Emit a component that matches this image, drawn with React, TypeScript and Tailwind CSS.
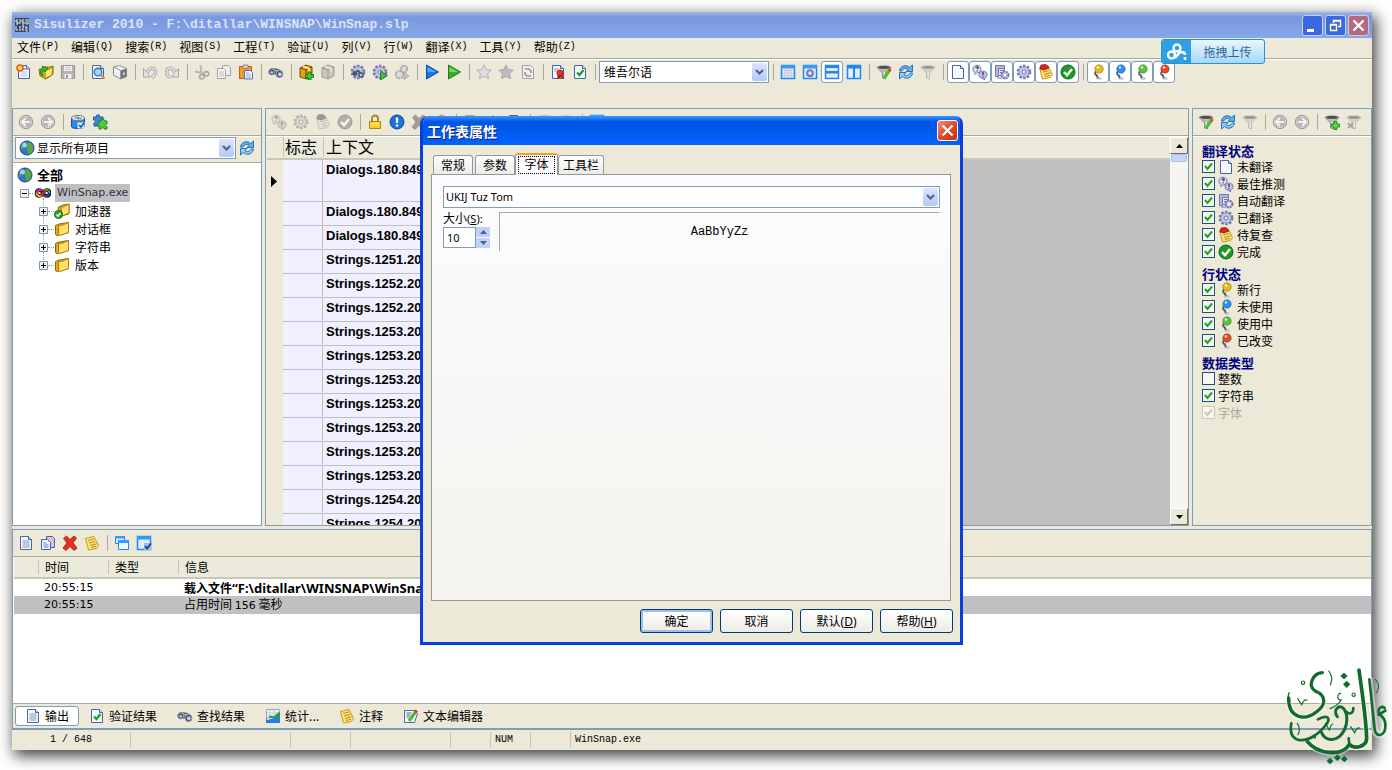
import React from 'react';
import clsx from 'clsx';

const page = (
  <>
    <path d="M2.500 1.500h8l3 3v10h-11z" fill="#f4f8ff" stroke="#4a64a0" />
    <path d="M10.500 1.500v3h3" fill="#cfdcf5" stroke="#4a64a0" />
  </>
);

const gear = (
  <>
    <circle cx="8" cy="8" r="6" fill="none" stroke="#6f74ad" strokeWidth="2.600" strokeDasharray="2.400 1.400" />
    <circle cx="8" cy="8" r="5.200" fill="#c3c6ea" stroke="#8a8fc4" />
    <circle cx="8" cy="8" r="2" fill="#f1f1fb" stroke="#6f74ad" />
  </>
);

const funnel = (
  <>
    <path d="M1 3.500 6.500 9v5l3 1V9L15 3.500z" fill="#b9b9b9" stroke="#777" strokeWidth=".7" />
    <ellipse cx="8" cy="3.400" rx="7" ry="2.100" fill="#4f4f4f" stroke="#c9c9c9" />
    <path d="M8.300 8v6" stroke="#eee" strokeWidth="1.200" />
  </>
);

const binoculars = (
  <>
    <path d="M.5 6.500 3 4l5 .5L11 5l4 3.500-.5 4-4 1.500-3-3.500-3 .5-3.500-1z" fill="#56606e" />
    <circle cx="3.800" cy="8" r="3" fill="#39424e" stroke="#9ba4af" />
    <circle cx="11.500" cy="10" r="3.500" fill="#39424e" stroke="#9ba4af" />
    <circle cx="3.800" cy="8.300" r="1.500" fill="#a9c7e8" />
    <circle cx="11.800" cy="10.200" r="2" fill="#b9d5f2" />
    <path d="m5 5 3 2 3-1" stroke="#c3c9d1" fill="none" />
  </>
);

const box = (
  <>
    <path d="m2 4 6-3 6 2v9l-6 3-6-2z" fill="#e2a01b" stroke="#7a4d08" />
    <path d="m2 4 6 2 6-3M8 6v9" stroke="#7a4d08" fill="none" />
    <path d="m5 2.500 6 2v3" stroke="#fff0b0" strokeWidth="1.600" fill="none" />
  </>
);

const doubleGear = (
  <>
    <circle cx="10" cy="5" r="3.300" fill="#dcdcdc" stroke="#a3a3a3" strokeWidth="2" strokeDasharray="1.600 1" />
    <circle cx="5.500" cy="10.500" r="3.800" fill="#dcdcdc" stroke="#a3a3a3" strokeWidth="2" strokeDasharray="1.600 1" />
    <path d="m10 8.500 5 3.500-5 3.500z" fill="#c4c4c4" stroke="#a3a3a3" strokeWidth=".8" />
  </>
);

const noteSheet = (
  <>
    <path d="m1.500 3.500 8.500-2 4.500 9-2 3-8 1.500z" fill="#fbe27a" stroke="#c79a1c" />
    <path d="m4 5.500 6-1.500M5 8l6-1.500M6 10.500l6.500-1.700M7 12.500l5-1.200" stroke="#b88a1c" />
  </>
);

const frame = <path d="M1.500 1.500h13v13h-13z" fill="#e4ecff" stroke="#1c86f2" strokeWidth="1.500" />;

const circleBack = (
  <>
    <circle cx="8" cy="8" r="6.700" fill="#b4b4b4" stroke="#989898" />
    <circle cx="8" cy="8" r="5.700" fill="none" stroke="#d2d2d2" />
  </>
);

const starPath = 'm8 1 2.200 4.600 5 .6-3.700 3.500 1 5L8 12.300l-4.500 2.400 1-5L.8 6.200l5-.6z';

const art = {
  page,
  gear,
  funnel,
  binoculars,
  note: noteSheet,
  newDoc: (
    <>
      {page}
      <path d="M2.500 5h11" stroke="#7d9de0" strokeWidth="1.500" />
      <path d="M5 8h6M5 10h6M5 12h6" stroke="#b7c8ea" />
      <circle cx="4" cy="4" r="3" fill="#ffdd35" stroke="#f2542c" strokeWidth="1.500" />
    </>
  ),
  open: (
    <>
      <path d="M1 5h5l1-2h5l3-1v8l-7 5-6-3z" fill="#f0c024" stroke="#9a7408" />
      <path d="m7 7 8-4-1 8-7 4z" fill="#ffe56a" stroke="#9a7408" />
      <path d="M4 12C1 8 2 5 5 4L4 2l6 2-3 4-.5-2C4.500 7 4 9 5 12z" fill="#35b52a" stroke="#157013" strokeWidth=".7" />
    </>
  ),
  save: (
    <>
      <path d="M1.500 1.500h13v13h-13z" fill="#b5b5b5" stroke="#989898" />
      <path d="M4 2h8v5H4zM4.500 10h7v4.500h-7z" fill="#f2f2f2" />
      <path d="M6 11h2v3H6z" fill="#999" />
      <path d="M5 3.500h6M5 5.500h6" stroke="#c4c4c4" />
    </>
  ),
  preview: (
    <>
      {page}
      <circle cx="8" cy="8" r="3.800" fill="#a8d5f8" stroke="#2f76b5" strokeWidth="1.400" />
      <path d="m11 11 3.500 3.500" stroke="#e8842c" strokeWidth="2.300" />
    </>
  ),
  pack: (
    <>
      <path d="m1.500 3 6-1.500 7 3v8l-6 2.500-7-4z" fill="#f2f2f2" stroke="#8b8b8b" />
      <path d="m8.500 6.500 6-2v8l-6 2.500z" fill="#777" />
      <path d="m1.500 3 7 3.500v8" stroke="#999" fill="none" />
      <path d="m11 9 2-.7v2l-2 .7z" fill="#ddd" />
    </>
  ),
  undo: (
    <>
      <path d="M5 9.500C6 4 12.500 2 13.200 7c.3 3-1.200 5.500-3.700 6.500" fill="none" stroke="#a8a8a8" strokeWidth="3.400" />
      <path d="M1.500 4.500v8.500h7z" fill="#e4e4e4" stroke="#a8a8a8" />
      <path d="M5 9.500C6 4 12.500 2 13.200 7c.3 3-1.200 5.500-3.700 6.500" fill="none" stroke="#e4e4e4" strokeWidth="1.500" />
    </>
  ),
  redo: (
    <>
      <path d="M11 9.500C10 4 3.500 2 2.800 7c-.3 3 1.200 5.500 3.700 6.500" fill="none" stroke="#a8a8a8" strokeWidth="3.400" />
      <path d="M14.500 4.500v8.500h-7z" fill="#e4e4e4" stroke="#a8a8a8" />
      <path d="M11 9.500C10 4 3.500 2 2.800 7c-.3 3 1.200 5.500 3.700 6.500" fill="none" stroke="#e4e4e4" strokeWidth="1.500" />
    </>
  ),
  cut: (
    <>
      <path d="M1 7.500 11 9.500M6.500 1l1 9" stroke="#b9b9b9" strokeWidth="2" />
      <circle cx="12.500" cy="9.800" r="2.200" fill="none" stroke="#a9a9a9" strokeWidth="1.600" />
      <circle cx="7.800" cy="12.800" r="2.200" fill="none" stroke="#a9a9a9" strokeWidth="1.600" />
    </>
  ),
  copy: (
    <>
      <path d="M6.500 1.500h6l2 2v8h-8z" fill="#eee" stroke="#a4a4a4" />
      <path d="M1.500 4.500h6l2 2v8h-8z" fill="#f6f6f6" stroke="#a4a4a4" />
      <path d="M3 8h5M3 10h5M3 12h5" stroke="#bdbdbd" />
    </>
  ),
  paste: (
    <>
      <path d="M1.500 2.500h12v12h-12z" fill="#f39b2d" stroke="#b5650d" />
      <path d="M5 1h5v3.500H5z" fill="#ccd0d8" stroke="#777" strokeWidth=".7" />
      <path d="M6.500 6.500h6l2 2v6.500h-8z" fill="#f4f7ff" stroke="#5872ab" />
      <path d="M8 9h3M8 11h5M8 13h5" stroke="#93a7d2" />
    </>
  ),
  boxAdd: (
    <>
      {box}
      <path d="M10 8h3v2.500h2.500v3H13V16h-3v-2.500H7.500v-3H10z" fill="#3ecb2f" stroke="#0c6b10" strokeWidth=".8" />
    </>
  ),
  boxOff: box,
  gearFind: (
    <>
      {gear}
      <circle cx="5" cy="9.500" r="2.400" fill="#4b5563" />
      <circle cx="11" cy="11" r="2.800" fill="#4b5563" />
      <circle cx="11" cy="11" r="1.300" fill="#b9d5f2" />
      <path d="m5 8.500 3-1.500 3 2.500" stroke="#4b5563" strokeWidth="1.800" fill="none" />
    </>
  ),
  gearPlay: (
    <>
      {gear}
      <path d="m8.500 7 7 4.500-7 4.500z" fill="#3fbf35" stroke="#187515" strokeWidth=".8" />
    </>
  ),
  gears: doubleGear,
  playBlue: (
    <>
      <path d="m2.500 1 12 7-12 7z" fill="#1878e8" stroke="#0c4aa8" />
      <path d="M3.500 3v5h8.500z" fill="#5aa8fa" />
    </>
  ),
  playGreen: (
    <>
      <path d="m2.500 1 12 7-12 7z" fill="#3dae2c" stroke="#1f7d18" />
      <path d="M3.500 3v5h8.500z" fill="#7ed464" />
    </>
  ),
  star: <path d={starPath} fill="#dedede" stroke="#b4b4b4" />,
  starDark: <path d={starPath} fill="#bcbcbc" stroke="#a8a8a8" />,
  docSync: (
    <>
      <path d="M2.500 1.500h8l3 3v10h-11z" fill="#f0f0f0" stroke="#a3a3a3" />
      <path d="M5 5h4l2 2v2M11 12H7L5 10V8" fill="none" stroke="#969696" strokeWidth="1.700" />
    </>
  ),
  award: (
    <>
      {page}
      <path d="M4 5h5M4 7h3" stroke="#8da0c8" />
      <path d="m7 15 1-5h4l2 5-3-1.500z" fill="#c0150b" />
      <circle cx="10" cy="9" r="3" fill="#f0331c" stroke="#b51106" />
    </>
  ),
  docCheck: (
    <>
      {page}
      <path d="m5 8.500 2.500 2.500 4-5" fill="none" stroke="#1ea327" strokeWidth="2.400" />
    </>
  ),
  viewGrid: (
    <>
      {frame}
      <path d="M1 1h14v3.500H1z" fill="#2e9bff" />
      <path d="M2.500 6.500h11M2.500 9h11M2.500 11.500h11M5 5v9M8 5v9M11 5v9" stroke="#c1b8c8" strokeWidth=".7" />
    </>
  ),
  viewGear: (
    <>
      {frame}
      <path d="M1 1h14v3.500H1z" fill="#2e9bff" />
      <circle cx="8" cy="9.200" r="3" fill="#b9bce0" stroke="#777ba8" strokeWidth="1.800" />
      <circle cx="8" cy="9.200" r="1" fill="#fff" />
    </>
  ),
  viewRows: (
    <>
      {frame}
      <path d="M1 1h14v3H1zM1 7h14v2.500H1z" fill="#1c86f2" />
    </>
  ),
  viewCols: (
    <>
      {frame}
      <path d="M1 1h14v3.500H1zM7 2h2v13H7z" fill="#1c86f2" />
    </>
  ),
  funnelEdit: (
    <>
      {funnel}
      <path d="m8 14 5.500-7.500" stroke="#45c429" strokeWidth="3" />
      <path d="m13 7 1.500-2" stroke="#e3382a" strokeWidth="3" />
    </>
  ),
  funnelAdd: (
    <>
      {funnel}
      <path d="M10 7.500h3V10h2.500v3H13v2.500h-3V13H7.500v-3H10z" fill="#5cd543" stroke="#0c7a10" strokeWidth=".8" />
    </>
  ),
  funnelDel: (
    <>
      {funnel}
      <path d="m2 9 5 5M7 9l-5 5" stroke="#666" strokeWidth="1.800" />
    </>
  ),
  refresh: (
    <>
      <path d="M1.500 7C2 2 8 0 11.500 3.500L14.500 1v6.500H8L10 5.300C7.500 3.500 5 4.500 4 7z" fill="#5fb0f3" stroke="#1d65b3" strokeWidth=".9" />
      <path d="M14.500 9c-.5 5-6.500 7-10 3.500L1.500 15V8.500H8L6 10.700c2.500 1.800 5 .8 6-1.700z" fill="#8ccaf8" stroke="#1d65b3" strokeWidth=".9" />
    </>
  ),
  guess: (
    <>
      <path d="M1 5c0-5 8-5 8 0 0 3-3 4-4.500 4L3 10.500V8.500C1.500 8 1 6.500 1 5z" fill="#e0e1f5" stroke="#6f74ad" />
      <path d="M7 10.500c0-4.500 8-4.500 8 0 0 2-1 3-2.500 3.500V16L10 14c-2 0-3-1.500-3-3.500z" fill="#bdc0e6" stroke="#6f74ad" />
      <path d="M3.700 3.800c.3-1.500 3-1.300 2.500.2L5 5.200M5 6.500v1M11 8v3M11 12.200v1" stroke="#1f2350" strokeWidth="1.200" fill="none" />
    </>
  ),
  autoTr: (
    <>
      <path d="M1.500 1.500h9v3h-6v8h-3z" fill="#b6b9de" stroke="#7377ae" />
      <path d="M4.500 4.500h6v7h-6z" fill="#e3e4f6" stroke="#7377ae" />
      <path d="M6 6.500h4M6 8.500h4M3 14h5" stroke="#7377ae" />
      <circle cx="11" cy="11" r="3.500" fill="#c3c6ea" stroke="#6f74ad" strokeWidth="1.800" strokeDasharray="2 .8" />
      <circle cx="11" cy="11" r="1.200" fill="#fff" />
    </>
  ),
  review: (
    <>
      {noteSheet}
      <path d="m3 1 5-.5 3 3.500-5 2-4-1z" fill="#dc2418" stroke="#8e0f08" strokeWidth=".7" />
    </>
  ),
  done: (
    <>
      <circle cx="8" cy="8" r="7" fill="#1c9a26" stroke="#0b6615" />
      <path d="m4 8 3 3.200L12 5" fill="none" stroke="#fff" strokeWidth="2.500" />
    </>
  ),
  back: (
    <>
      {circleBack}
      <path d="M8 4 4 8l4 4M4.500 8H12" fill="none" stroke="#f4f4f4" strokeWidth="2" />
    </>
  ),
  forward: (
    <>
      {circleBack}
      <path d="m8 4 4 4-4 4M11.500 8H4" fill="none" stroke="#f4f4f4" strokeWidth="2" />
    </>
  ),
  dbCheck: (
    <>
      <path d="M1.500 4v9c1 2 12 2 13 0V4z" fill="#2b86e0" stroke="#1353a5" />
      <path d="M1.500 4c0-3.500 13-3.500 13 0s-13 3.500-13 0z" fill="#eef1f5" stroke="#707c8c" />
      <path d="M4 4h8M8 2v4M5 2.500l6 3" stroke="#7c8896" />
      <path d="M7.500 8.500h7v6h-7z" fill="#d7eaff" />
      <path d="m9 11 2 2 3-4" stroke="#1353a5" strokeWidth="1.500" fill="none" />
    </>
  ),
  plugin: (
    <>
      <path d="M1.500 3h3c-1-3 4-3 3 0H11v4c-3-1-3 4 0 3v2H2V9c2 0 2-3-.5-3z" fill="#3987d8" stroke="#1b579f" />
      <path d="M7 7h2.500c-.5-2.500 3.500-2.500 3 0H15v3c-2 0-2 2.500 0 2.500V15h-3c0-2-2.500-2-2.500 0H7v-3c-2 0-2-2.500 0-2.500z" fill="#53c83a" stroke="#1f8419" />
    </>
  ),
  globe: (
    <>
      <circle cx="8" cy="8" r="7" fill="#2c78c4" stroke="#174c86" />
      <path d="M9 2c3 0 5 3 5.300 5.500C14 11 12 13.500 10.500 14 8 13 9 11 8 9s1-2 .500-3.500S8 3 9 2zM2 6l2-1v4l-1.500 1C1.500 9 1.500 7 2 6z" fill="#5da53f" />
      <circle cx="5.500" cy="5" r="2.500" fill="#cfe9ff" opacity=".75" />
    </>
  ),
  lock: (
    <>
      <path d="M5 8V4.500c0-4 6-4 6 0V8" fill="none" stroke="#a98614" strokeWidth="1.800" />
      <path d="M2.500 7.500h11v7h-11z" fill="#ffcb1f" stroke="#b5820a" />
      <path d="M4 9h8M4 11h8" stroke="#ffe98a" />
    </>
  ),
  alert: (
    <>
      <circle cx="8" cy="8" r="7" fill="#1a73dc" stroke="#0b4a9c" />
      <path d="M8 3.500V9M8 10.500v2" stroke="#fff" strokeWidth="2.400" />
    </>
  ),
  cross: <path d="M1.500 3.500 4.500 1 8 4.500 12 1l2.500 2L11 8l4 5-3 2.500-4-4-4 4L1 13l4-5z" fill="#e5301d" stroke="#9c140a" strokeWidth=".8" />,
  textDoc: (
    <>
      {page}
      <path d="M4.500 6h7M4.500 8h7M4.500 10h7M4.500 12h7" stroke="#8798b8" />
    </>
  ),
  copyDocs: (
    <>
      <path d="M6.500 1.500h6l2 2v9h-8z" fill="#cfc4ea" stroke="#65549a" />
      <path d="M1.500 4.500h6l3 3v7h-9z" fill="#f2f6ff" stroke="#4a64a0" />
      <path d="M3.500 8h3M3.500 10h5M3.500 12h5" stroke="#6580b8" />
    </>
  ),
  windows: (
    <>
      <path d="M1.500 1.500h9v7h-9z" fill="#dcecff" stroke="#1c86f2" />
      <path d="M1 1h10v2.500H1z" fill="#2e9bff" />
      <path d="M4.500 5.500h10v9h-10z" fill="#eff6ff" stroke="#1c86f2" />
      <path d="M4 5h11v3H4z" fill="#2e9bff" />
    </>
  ),
  winCheck: (
    <>
      {frame}
      <path d="M1 1h14v3.500H1z" fill="#2e9bff" />
      <path d="M8 8h7v7H8z" fill="#9dbbe8" />
      <path d="m9 11 2 2.500 4-5" fill="none" stroke="#143f93" strokeWidth="1.800" />
    </>
  ),
  chart: (
    <>
      <path d="M1.500 1.500h13v13h-13z" fill="#eef1f7" stroke="#9aa6bd" />
      <path d="M2 5h12M2 8h12M5 2v12M9 2v12" stroke="#c3ccdc" />
      <path d="M1 11c4-1 3-5 6-3s4-4 8-4v6H1z" fill="#29a03a" />
      <path d="M1 12c5 0 7-3 14-3v6H1z" fill="#2a7ae0" />
    </>
  ),
  edit: (
    <>
      <path d="M1.500 2.500h10l3 3-3 9h-10z" fill="#f4f8ff" stroke="#53688e" />
      <path d="M3.500 5h5M3.500 7h4M3.500 9h3" stroke="#55647d" />
      <path d="m6 13 6.500-9" stroke="#41bd31" strokeWidth="3" />
      <path d="m12 4.500 1.700-2.300" stroke="#e3382a" strokeWidth="3.200" />
    </>
  ),
  folder: (
    <>
      <path d="M1.500 4.500 5 3l9.500-1.500v10L3 14.500l-1.500-1z" fill="#e2a91d" stroke="#946705" />
      <path d="m4.500 4 3 .5 7-3v10l-8.500 3-1.500-1z" fill="#ffe068" stroke="#b07d0b" />
    </>
  ),
  folderDone: (
    <>
      <path d="M4 4.500 9 2l6-1v10L5 13.500z" fill="#e2a91d" stroke="#946705" />
      <path d="m7 3.500 2 .5 6-3v9l-7 3z" fill="#ffe068" stroke="#b07d0b" />
      <circle cx="4.500" cy="11.500" r="4" fill="#2fa332" stroke="#11691a" />
      <path d="m2.500 11.500 1.500 1.700 2.500-3.200" fill="none" stroke="#fff" strokeWidth="1.500" />
    </>
  ),
  exe: (
    <>
      <path d="M8 8C6 4 1.500 4 1.500 8S6 12 8 8s6.500-4 6.500 0S10 12 8 8z" fill="none" stroke="#111" strokeWidth="3.600" />
      <path d="M7 6C5 4 1.500 5 1.500 8" fill="none" stroke="#e01fc0" strokeWidth="1.800" />
      <path d="M1.500 8c0 3 3.500 4 5.500 2" fill="none" stroke="#f4d316" strokeWidth="1.800" />
      <path d="M9 6c2-2 5.500-1 5.500 2" fill="none" stroke="#2bc32b" strokeWidth="1.800" />
      <path d="M14.500 8c0 3-3.500 4-5.500 2" fill="none" stroke="#2540e0" strokeWidth="1.800" />
      <path d="m6 11 4.500-6" stroke="#e3221a" strokeWidth="2.400" />
    </>
  ),
};

type IconName = keyof typeof art;

const Icon: React.FC<{ name: IconName; off?: boolean }> = ({ name, off }) => (
  <svg viewBox="0 0 16 16" className={clsx('size-4 shrink-0', off && 'opacity-50 grayscale')} aria-hidden="true">
    {art[name]}
  </svg>
);

const Pin: React.FC<{ color: string }> = ({ color }) => (
  <svg viewBox="0 0 16 16" className="size-4 shrink-0" aria-hidden="true">
    <ellipse cx="9" cy="14.500" rx="3" ry="1.300" fill="#b9cbd3" />
    <path d="M6 7.500c-2 2-.5 3.500.5 3.500l1.500 3" stroke="#5b5b5b" strokeWidth="1.800" fill="none" />
    <circle cx="9" cy="5" r="4.300" fill={color} stroke="#00000055" strokeWidth=".8" />
    <circle cx="8" cy="3.500" r="1.300" fill="#fff" opacity=".75" />
  </svg>
);

const Separator = () => (
  <div className="flex w-2 shrink-0 justify-center">
    <div className="h-4 w-px bg-[#aca899]" />
  </div>
);

type Tool = IconName | `${IconName}!` | '|';

// "!" marks a disabled tool, "|" a separator
const Tools: React.FC<{ items: Tool[]; boxed?: IconName[] }> = ({ items, boxed = [] }) => (
  <>
    {items.map((item, i) => {
      if (item === '|') return <Separator key={i} />;
      const off = item.endsWith('!');
      const name = item.replace('!', '') as IconName;
      return (
        <button
          key={i}
          type="button"
          aria-label={name}
          disabled={off}
          className={clsx(
            'flex size-[22px] shrink-0 items-center justify-center rounded-[3px]',
            boxed.includes(name) && 'border border-[#7f9db9] bg-white'
          )}
        >
          <Icon name={name} off={off} />
        </button>
      );
    })}
  </>
);

const ToolStrip: React.FC<{ items: Tool[] }> = ({ items }) => (
  <div className="flex h-[27px] shrink-0 items-center overflow-hidden border-b border-[#aca899] pl-0.5">
    <Tools items={items} />
  </div>
);

const Combo: React.FC<{ label: string; value: string; className?: string; textClass?: string }> = ({
  label,
  value,
  className,
  textClass = 'pl-1',
}) => (
  <div className={clsx('grid h-[22px] border border-[#7f9db9] bg-white', className)}>
    <select
      aria-label={label}
      defaultValue={value}
      className={clsx('h-5 w-full appearance-none bg-transparent outline-none [grid-area:1/1]', textClass)}
    >
      <option>{value}</option>
    </select>
    <span className="pointer-events-none m-px flex w-[15px] items-center justify-center justify-self-end rounded-[2px] bg-gradient-to-b from-[#dbe5fe] to-[#b5c8f5] [grid-area:1/1]">
      <svg viewBox="0 0 9 6" className="h-1.5 w-[9px]">
        <path d="m1 1 3.500 3.500L8 1" fill="none" stroke="#4d6185" strokeWidth="2" />
      </svg>
    </span>
  </div>
);

const menus = [
  ['文件', 'P'], ['编辑', 'Q'], ['搜索', 'R'], ['视图', 'S'], ['工程', 'T'], ['验证', 'U'],
  ['列', 'V'], ['行', 'W'], ['翻译', 'X'], ['工具', 'Y'], ['帮助', 'Z'],
];

const MenuBar = () => (
  <nav className="flex h-[21px] shrink-0 items-start gap-3 border-b border-[#aca899] px-[5px]">
    {menus.map(([label, key]) => (
      <button key={key} type="button" className="flex items-center leading-[18px] whitespace-nowrap">
        {label}
        <span className="font-['Liberation_Mono',monospace] text-[10px]">({key})</span>
      </button>
    ))}
  </nav>
);

const TitleBar = () => (
  <header className="flex h-[26px] shrink-0 items-center bg-gradient-to-b from-[#9db9eb] via-[#7a96df] via-20% to-[#84a9e9] px-[3px]">
    <svg viewBox="0 0 14 14" className="size-3.5 shrink-0" aria-hidden="true">
      <path d="M0 0h14v14H0z" fill="#3a4a63" />
      <path d="M1 2h2M1 2v2h2v2H1M5 1v5M7 2h2M7 2v2h2v2H7M11 1v5h2V1M1 8v4h2M5 8v5M7 8h2l-2 4h2M11 8v5h2M11 10h2" stroke="#dfe8f5" fill="none" />
    </svg>
    <h1 className="flex-1 truncate pl-[5px] font-['Liberation_Mono',monospace] text-[13px] font-bold text-[#d8e4f8]">
      Sisulizer 2010 - F:\ditallar\WINSNAP\WinSnap.slp
    </h1>
    <div className="flex gap-0.5">
      <button type="button" aria-label="最小化" className="flex size-[21px] items-center justify-center rounded-[3px] border border-[#c5d3f7] bg-[#3c68dd]">
        <svg viewBox="0 0 19 19" className="size-[19px]"><path d="M4 13h7v3H4z" fill="#fff" /></svg>
      </button>
      <button type="button" aria-label="还原" className="flex size-[21px] items-center justify-center rounded-[3px] border border-[#c5d3f7] bg-[#3c68dd]">
        <svg viewBox="0 0 19 19" className="size-[19px]">
          <path d="M7.500 7V4.500h7v6H12M7 5h8M4.500 8.500h6v6h-6zM4 9h7" fill="none" stroke="#fff" strokeWidth="1.400" />
        </svg>
      </button>
      <button type="button" aria-label="关闭" className="flex size-[21px] items-center justify-center rounded-[3px] border border-[#d9c5dc] bg-[#b36a80]">
        <svg viewBox="0 0 19 19" className="size-[19px]"><path d="m4.500 4.500 10 10M14.500 4.500l-10 10" stroke="#fff" strokeWidth="2.200" /></svg>
      </button>
    </div>
  </header>
);

const pins = ['#e5bd12', '#2391f5', '#55c53c', '#e34923'];

const MainToolbar = () => (
  <div className="flex h-[49px] shrink-0 items-start overflow-hidden border-t border-white pt-px pl-px">
    <div className="flex items-center">
      <Tools
        boxed={['viewRows']}
        items={[
          'newDoc', 'open', 'save', '|', 'preview', 'pack', '|', 'undo', 'redo', '|', 'cut', 'copy', 'paste', '|',
          'binoculars', '|', 'boxAdd', 'boxOff!', '|', 'gearFind', 'gearPlay', 'gears', '|', 'playBlue', 'playGreen', '|',
          'star', 'starDark', 'docSync', '|', 'award', 'docCheck', '|',
        ]}
      />
      <Combo label="语言" value="维吾尔语" className="w-[170px] shrink-0" />
      <Tools
        boxed={['viewRows', 'page', 'guess', 'autoTr', 'gear', 'review', 'done']}
        items={[
          '|', 'viewGrid', 'viewGear', 'viewRows', 'viewCols', '|', 'funnelEdit', 'refresh', 'funnel!', '|',
          'page', 'guess', 'autoTr', 'gear', 'review', 'done', '|',
        ]}
      />
      {pins.map((color) => (
        <button key={color} type="button" aria-label="行状态" className="flex size-[22px] shrink-0 items-center justify-center rounded-[3px] border border-[#7f9db9] bg-white">
          <Pin color={color} />
        </button>
      ))}
    </div>
  </div>
);

const Expander: React.FC<{ open?: boolean }> = ({ open }) => (
  <svg viewBox="0 0 9 9" className="size-[9px] shrink-0" aria-hidden="true">
    <path d="M.5.5h8v8h-8z" fill="#f3f1ea" stroke="#7898b5" />
    <path d={open ? 'M2 4.500h5' : 'M2 4.500h5M4.500 2v5'} stroke="#000" />
  </svg>
);

const folders = ['加速器', '对话框', '字符串', '版本'];

const ProjectPanel = () => (
  <section className="flex w-[250px] shrink-0 flex-col border border-[#7f9db9]">
    <ToolStrip items={['back', 'forward', '|', 'dbCheck', 'plugin']} />
    <div className="flex h-[27px] shrink-0 items-start gap-[3px] border-y border-t-white border-b-[#aca899] pl-0.5">
      <div className="grid w-[221px] items-center">
        <Combo label="显示项目" value="显示所有项目" className="[grid-area:1/1]" textClass="pl-[21px]" />
        <span className="pointer-events-none pl-1 [grid-area:1/1]"><Icon name="globe" /></span>
      </div>
      <button type="button" aria-label="刷新" className="flex h-[22px] items-center"><Icon name="refresh" /></button>
    </div>
    <ul className="flex-1 bg-white pt-[3px] pl-1">
      <li className="flex h-[18px] items-center gap-1 text-[13px] font-bold"><Icon name="globe" />全部</li>
      <li>
        <div className="flex h-[18px] items-center pl-[3px]">
          <Expander open />
          <span className="w-1.5 border-t border-dotted border-gray-400" />
          <Icon name="exe" />
          <span className="ml-1 h-[18px] bg-[#c0c0c0] px-0.5 font-['DejaVu_Sans',sans-serif] text-[11px] leading-[18px] text-[#303048]">WinSnap.exe</span>
        </div>
        <ul className="ml-[26px]">
          {folders.map((name, i) => (
            <li key={name} className="relative flex h-[18px] items-center">
              <span className="absolute left-0 -top-1 h-3 border-l border-dotted border-gray-400" />
              <span className="relative -ml-1 flex items-center">
                <Expander />
                <span className="w-1.5 border-t border-dotted border-gray-400" />
                <Icon name={i === 0 ? 'folderDone' : 'folder'} />
              </span>
              <span className="pl-[5px]">{name}</span>
            </li>
          ))}
        </ul>
      </li>
    </ul>
  </section>
);

const contexts = [
  'Dialogs.180.849', 'Dialogs.180.849', 'Dialogs.180.849', 'Strings.1251.20', 'Strings.1252.20', 'Strings.1252.20',
  'Strings.1253.20', 'Strings.1253.20', 'Strings.1253.20', 'Strings.1253.20', 'Strings.1253.20', 'Strings.1253.20',
  'Strings.1253.20', 'Strings.1254.20', 'Strings.1254.20',
];

const ScrollButton: React.FC<{ down?: boolean }> = ({ down }) => (
  <button
    type="button"
    aria-label={down ? '向下滚动' : '向上滚动'}
    className="flex h-[17px] w-full shrink-0 items-center justify-center border border-t-white border-r-[#716f64] border-b-[#716f64] border-l-white bg-[#ece9d8]"
  >
    <svg viewBox="0 0 7 4" className="h-1 w-[7px]"><path d={down ? 'M0 0h7L3.500 4z' : 'M0 4h7L3.500 0z'} /></svg>
  </button>
);

const SheetPanel = () => (
  <section className="flex min-w-0 flex-1 flex-col border border-[#7f9db9]">
    <ToolStrip
      items={[
        'guess!', 'gear!', 'review!', 'done!', '|', 'lock', 'alert', 'cross!', 'boxOff!', '|', 'docSync', 'star', 'award', '|',
        'funnel', 'funnel!', '|', 'viewGrid',
      ]}
    />
    <div className="flex min-h-0 flex-1 border-t border-white pl-px">
      <div className="min-w-0 flex-1 overflow-hidden bg-[#c0c0c0]">
        <table className="w-full table-fixed border-separate border-spacing-0">
          <colgroup>
            <col className="w-4" />
            <col className="w-10" />
            <col className="w-[300px]" />
            <col />
          </colgroup>
          <thead className="bg-[#ebeadb]">
            <tr className="h-[23px] text-left align-top text-[16px]">
              <th className="border-b-2 border-[#cbc7b8] p-0" />
              <th className="border-b-2 border-[#cbc7b8] p-0 font-normal">
                <span className="block h-5 border-l border-[#c7c5b2] pl-px leading-[18px]">标志</span>
              </th>
              <th className="border-b-2 border-[#cbc7b8] p-0 font-normal">
                <span className="block h-5 border-l border-[#c7c5b2] pl-0.5 leading-[18px]">上下文</span>
              </th>
              <th className="border-b-2 border-[#cbc7b8] p-0" />
            </tr>
          </thead>
          <tbody className="font-['Liberation_Sans',sans-serif] text-[13px] font-bold">
            {contexts.map((text, i) => (
              <tr key={i} className={i === 0 ? 'h-[42px]' : 'h-6'}>
                <td className="bg-[#ece9d8] p-0">
                  {i === 0 && (
                    <svg viewBox="0 0 6 11" className="ml-1 h-[11px] w-1.5"><path d="M0 0v11l6-5.500z" /></svg>
                  )}
                </td>
                <td className="border-r border-b border-[#c0c0c0] bg-[#f0f0ff] p-0" />
                <td className="border-b border-[#c0c0c0] bg-[#f0f0ff] py-0 pt-0.5 pl-[3px] align-top leading-4">{text}</td>
              </tr>
            ))}
          </tbody>
        </table>
      </div>
      <div className="flex w-[18px] shrink-0 flex-col bg-[#f6f5f0]">
        <ScrollButton />
        <div className="mx-px h-2 rounded-[2px] border border-[#aabff0] bg-[#c6d5fb]" />
        <div className="flex-1" />
        <ScrollButton down />
      </div>
    </div>
  </section>
);

const Check: React.FC<{ label: string; checked?: boolean; disabled?: boolean; children?: React.ReactNode }> = ({
  label,
  checked = true,
  disabled,
  children,
}) => (
  <label className={clsx('flex h-[17px] items-center gap-[3px]', disabled && 'text-[#aca899]')}>
    <span className="grid size-[13px] place-items-center">
      <input
        type="checkbox"
        defaultChecked={checked}
        disabled={disabled}
        className="peer size-[13px] appearance-none border border-[#1c5180] bg-[#f6f6f2] [grid-area:1/1] disabled:border-[#cac8bb]"
      />
      <svg viewBox="0 0 9 9" className="pointer-events-none invisible size-[9px] text-[#21a121] [grid-area:1/1] peer-checked:visible peer-disabled:text-[#cac8bb]">
        <path d="m1 4 2.500 3L8 1.500" fill="none" stroke="currentColor" strokeWidth="2" />
      </svg>
    </span>
    {children}
    <span className="leading-[14px]">{label}</span>
  </label>
);

const FilterGroup: React.FC<{ title: string; children: React.ReactNode }> = ({ title, children }) => (
  <fieldset>
    <legend className="h-[14px] text-[13px] leading-[14px] font-bold text-[#000080]">{title}</legend>
    {children}
  </fieldset>
);

const statuses: [string, IconName][] = [
  ['未翻译', 'page'],
  ['最佳推测', 'guess'],
  ['自动翻译', 'autoTr'],
  ['已翻译', 'gear'],
  ['待复查', 'review'],
  ['完成', 'done'],
];

const FilterPanel = () => (
  <aside className="flex w-[180px] shrink-0 flex-col border border-[#7f9db9]">
    <ToolStrip items={['funnelEdit', 'refresh', 'funnel!', '|', 'back', 'forward', '|', 'funnelAdd', 'funnelDel!']} />
    <div className="flex flex-1 flex-col gap-[7px] border-t border-white pt-[7px] pl-[9px]">
      <FilterGroup title="翻译状态">
        {statuses.map(([label, icon]) => (
          <Check key={label} label={label}><Icon name={icon} /></Check>
        ))}
      </FilterGroup>
      <FilterGroup title="行状态">
        {['新行', '未使用', '使用中', '已改变'].map((label, i) => (
          <Check key={label} label={label}><Pin color={pins[i]} /></Check>
        ))}
      </FilterGroup>
      <FilterGroup title="数据类型">
        <Check label="整数" checked={false} />
        <Check label="字符串" />
        <Check label="字体" disabled />
      </FilterGroup>
    </div>
  </aside>
);

const outputTabs: [string, IconName][] = [
  ['输出', 'textDoc'],
  ['验证结果', 'docCheck'],
  ['查找结果', 'binoculars'],
  ['统计...', 'chart'],
  ['注释', 'note'],
  ['文本编辑器', 'edit'],
];

const OutputPanel = () => (
  <section className="mt-[3px] flex h-[201px] shrink-0 flex-col border border-b-2 border-[#7f9db9]">
    <ToolStrip items={['textDoc', 'copyDocs', 'cross', 'note', '|', 'windows', 'winCheck']} />
    <div className="flex-1 overflow-hidden bg-white pl-px">
      <table className="w-full table-fixed border-separate border-spacing-0 text-left">
        <colgroup>
          <col className="w-6" />
          <col className="w-[70px]" />
          <col className="w-[70px]" />
          <col />
        </colgroup>
        <thead>
          <tr className="h-[22px] bg-[#ebeadb]">
            <th className="border-b-2 border-[#cbc7b8] p-0" />
            {['时间', '类型', '信息'].map((name) => (
              <th key={name} className="border-b-2 border-[#cbc7b8] p-0 font-normal">
                <span className="block border-l border-[#c7c5b2] pl-1.5 leading-[14px]">{name}</span>
              </th>
            ))}
          </tr>
        </thead>
        <tbody>
          <tr className="h-[17px] leading-4">
            <td className="p-0" />
            <td className="p-0 pl-1.5 font-['DejaVu_Sans',sans-serif] text-[11px]">20:55:15</td>
            <td className="p-0" />
            <td className="truncate p-0 pl-1.5 font-bold">
              载入文件<span className="font-['Noto_Sans',sans-serif] text-[13px]">“F:\ditallar\WINSNAP\WinSnap.slp”</span>
            </td>
          </tr>
          <tr className="h-[17px] bg-[#c0c0c0] leading-4">
            <td className="p-0" />
            <td className="p-0 pl-1.5 font-['DejaVu_Sans',sans-serif] text-[11px]">20:55:15</td>
            <td className="p-0" />
            <td className="p-0 pl-1.5">
              占用时间 <span className="font-['DejaVu_Sans',sans-serif] text-[11px]">156</span> 毫秒
            </td>
          </tr>
        </tbody>
      </table>
    </div>
    <div className="flex h-[25px] shrink-0 items-center border-t border-[#aca899] pl-0.5">
      {outputTabs.map(([label, icon], i) => (
        <button
          key={label}
          type="button"
          className={clsx(
            'flex h-5 items-center gap-1 rounded-[3px] border px-[9px]',
            i === 0 ? 'border-[#7f9db9] bg-white' : 'border-transparent'
          )}
        >
          <Icon name={icon} />
          {label}
        </button>
      ))}
    </div>
  </section>
);

const StatusBar = () => (
  <footer className="flex h-5 shrink-0 items-center font-['Liberation_Mono',monospace] text-[10px] [&>span]:h-4 [&>span]:border-r [&>span]:border-[#c7c3b0] [&>span]:leading-4">
    <span className="w-[119px] text-center">1 / 648</span>
    <span className="w-40" />
    <span className="w-[60px]" />
    <span className="w-[100px]" />
    <span className="w-10" />
    <span className="w-10 pl-1">NUM</span>
    <span className="w-10" />
    <div className="pl-1">WinSnap.exe</div>
  </footer>
);

const DialogButton: React.FC<{ label: string; hotkey?: string; primary?: boolean }> = ({ label, hotkey, primary }) => (
  <button
    type="button"
    className={clsx(
      'h-6 w-[73px] rounded-[3px] border border-[#003c74] bg-gradient-to-b from-white to-[#ecebe5]',
      primary && 'shadow-[inset_0_0_0_2px_#a3bdf0]'
    )}
  >
    {label}
    {hotkey && <span className="font-['Noto_Sans',sans-serif]">(<u>{hotkey}</u>)</span>}
  </button>
);

const DialogTab: React.FC<{ label: string; active?: boolean }> = ({ label, active }) => (
  <button
    type="button"
    role="tab"
    aria-selected={!!active}
    className={clsx(
      'rounded-t-[3px] border border-b-0 border-[#919b9c]',
      active
        ? 'relative -mb-px h-[22px] border-t-2 border-t-[#f0a020] bg-[#fcfcfe] px-0.5'
        : 'h-[19px] bg-gradient-to-b from-white to-[#ecebe6] px-1'
    )}
  >
    {active ? <span className="block h-[18px] border border-dotted border-black px-1 leading-[14px]">{label}</span> : label}
  </button>
);

const SheetDialog = () => (
  <div
    role="dialog"
    aria-label="工作表属性"
    className="flex h-[529px] w-[543px] flex-col overflow-hidden rounded-t-[8px] border-x-[3px] border-b-[3px] border-[#0a3ee0] bg-[#ece9d8]"
  >
    <div className="flex h-[29px] shrink-0 items-center justify-between bg-gradient-to-b from-[#3d95ff] via-[#0055e5] via-20% to-[#0262fc] pr-0.5 pl-1">
      <h2 className="text-[14px] font-bold text-white [text-shadow:1px_1px_#0a1f7a]">工作表属性</h2>
      <button type="button" aria-label="关闭" className="size-[21px] rounded-[3px] border border-white bg-gradient-to-br from-[#f0927a] via-[#e0492a] to-[#c8320f]">
        <svg viewBox="0 0 19 19" className="size-[19px]"><path d="m4.500 4.500 10 10M14.500 4.500l-10 10" stroke="#fff" strokeWidth="2.200" /></svg>
      </button>
    </div>
    <div className="flex min-h-0 flex-1 flex-col pt-2 pr-[9px] pl-2">
      <div role="tablist" className="flex items-end pl-0.5">
        <div className="flex items-end gap-0.5 [&>button]:min-w-10">
          <DialogTab label="常规" />
          <DialogTab label="参数" />
        </div>
        <div className="flex items-end [&>button]:min-w-[43px]">
          <DialogTab label="字体" active />
          <DialogTab label="工具栏" />
        </div>
      </div>
      <div className="flex-1 border border-[#919b9c] bg-gradient-to-b from-[#fcfcfe] to-[#f4f3ee] pt-[11px] pr-2.5 pl-[11px]">
        <Combo label="字体" value="UKIJ Tuz Tom" textClass="pl-0.5 font-['Noto_Sans',sans-serif] text-[11px]" />
        <div className="mt-1 flex gap-2">
          <div className="w-12">
            <label htmlFor="size" className="block h-[15px] leading-[11px] whitespace-nowrap">
              大小<span className="font-['Noto_Sans',sans-serif] text-[11px]">(<u>S</u>):</span>
            </label>
            <div className="flex">
              <input
                id="size"
                defaultValue="10"
                className="h-[21px] w-[33px] border border-[#7f9db9] bg-white pl-[3px] font-['Noto_Sans',sans-serif] text-[11px] outline-none"
              />
              <div className="flex flex-col gap-px">
                <button type="button" aria-label="增大" className="flex h-2.5 w-[14px] items-center justify-center bg-[#c1d2f8]">
                  <svg viewBox="0 0 7 4" className="h-1 w-[7px]"><path d="M0 4h7L3.500 0z" fill="#4d6185" /></svg>
                </button>
                <button type="button" aria-label="减小" className="flex h-2.5 w-[14px] items-center justify-center bg-[#c1d2f8]">
                  <svg viewBox="0 0 7 4" className="h-1 w-[7px]"><path d="M0 0h7L3.500 4z" fill="#4d6185" /></svg>
                </button>
              </div>
            </div>
          </div>
          <div className="flex h-[39px] flex-1 items-center justify-center border border-t-[#aca899] border-r-white border-b-white border-l-[#aca899] font-['Liberation_Mono',monospace]">
            AaBbYyZz
          </div>
        </div>
      </div>
      <div className="-mr-0.5 flex justify-end gap-[7px] pt-2 pb-[9px]">
        <DialogButton label="确定" primary />
        <DialogButton label="取消" />
        <DialogButton label="默认" hotkey="D" />
        <DialogButton label="帮助" hotkey="H" />
      </div>
    </div>
  </div>
);

const UploadBadge = () => (
  <button
    type="button"
    className="absolute top-[27px] right-[107px] flex h-[25px] w-[104px] items-center overflow-hidden rounded-[3px] border border-[#2f8fc9] bg-gradient-to-b from-[#e9f6fe] to-[#a5d8f8] text-[#2a668f]"
  >
    <span className="flex h-full w-[29px] items-center justify-center bg-[#2e9fe6]">
      <svg viewBox="0 0 22 18" className="h-[18px] w-[22px]" fill="none" stroke="#fff" strokeWidth="2.500">
        <circle cx="11" cy="5" r="3.500" />
        <circle cx="5.500" cy="12" r="3.500" />
        <path d="M8.500 14.500c2.500 1 3-5.500 7-5.500 2.500 0 3.500 1.500 3.500 3M19 14v3" />
      </svg>
    </span>
    <span className="flex-1 leading-[14px]">拖拽上传</span>
  </button>
);

const Watermark = () => (
  <svg viewBox="108 80 306 300" className="absolute -right-4 -bottom-4 h-[100px] w-[102px]" fill="none" stroke="#116b2b" strokeLinecap="round" aria-hidden="true">
    <g stroke="#fff" strokeWidth="20" opacity=".45">
      <path d="M216 100c-34 5-46 47-15 62 30 16 17 46-8 61-40 27-78 6-77-52M327 92c8 60 20 130 23 205 0 25-35 34-52 18-24 40-96 28-126-8M358 120l16 150c4 28 34 18 32-20" />
    </g>
    <path d="M217 100c-30 2-46 42-20 56 34 14 30 42 2 62-36 28-84 18-83-42" strokeWidth="10" />
    <path d="M117 160c-4 12-4 24 1 38" strokeWidth="4" />
    <path d="M262 232c-16-22 10-42 22-20 14 26 4 62-16 80-18 14-44 12-54-14" strokeWidth="9" />
    <path d="M286 216c14 12 24 6 24-10" strokeWidth="8" />
    <path d="M204 240c26-14 40-6 26 14-24 32-56 52-84 48-24-6-26-28-22-50" strokeWidth="8" />
    <path d="M327 92c8 60 20 130 23 205 0 25-35 34-52 18-24 40-96 28-126-8" strokeWidth="11" />
    <path d="M298 315l-2-18" strokeWidth="8" />
    <path d="M358 120l16 150c4 28 34 20 32-14 0-14-6-22-14-28-14-10-2-34 12-22M386 226l20-12" strokeWidth="8" />
    <g strokeWidth="3.500">
      <path d="M236 95c10 12 12 26 5 42M376 120c12 10 12 26 4 40M240 208c12-4 24-12 34-26-14 2-14-20-2-20" />
      <path d="M143 178l12 18c4-10 8-16 16-14M226 252l12 20c4-10 4-16 10-18M302 262l12 18c4-10 8-16 14-14M142 252c6 10 8 24 2 34" />
      <circle cx="159" cy="130" r="5" />
      <circle cx="311" cy="166" r="5" />
      <circle cx="193" cy="292" r="4" />
    </g>
    <path d="m282 100 11 10-11 10-11-10zM290 124l11 11-11 11-11-11zM240 355l10 10-10 10-10-10zM262 345l10 10-10 10-10-10zM283 349l10 10-10 10-10-10z" fill="#116b2b" stroke="none" />
  </svg>
);

const App: React.FC = () => {
  return (
    <div className="h-screen overflow-hidden bg-white pt-3 pr-5 pb-5 pl-3 font-['Noto_Sans_CJK_SC',sans-serif] text-[12px] leading-4 text-black">
      <main className="relative flex h-full flex-col bg-[#ece9d8] shadow-[3px_5px_14px_1px_rgba(0,0,0,0.75)]">
        <TitleBar />
        <MenuBar />
        <MainToolbar />
        <div className="flex min-h-0 flex-1 gap-[3px]">
          <ProjectPanel />
          <SheetPanel />
          <FilterPanel />
        </div>
        <OutputPanel />
        <StatusBar />
        <UploadBadge />
        <div className="pointer-events-none absolute inset-0 flex items-center justify-center pr-px pb-px">
          <div className="pointer-events-auto">
            <SheetDialog />
          </div>
        </div>
        <Watermark />
      </main>
    </div>
  );
};

export default App;
